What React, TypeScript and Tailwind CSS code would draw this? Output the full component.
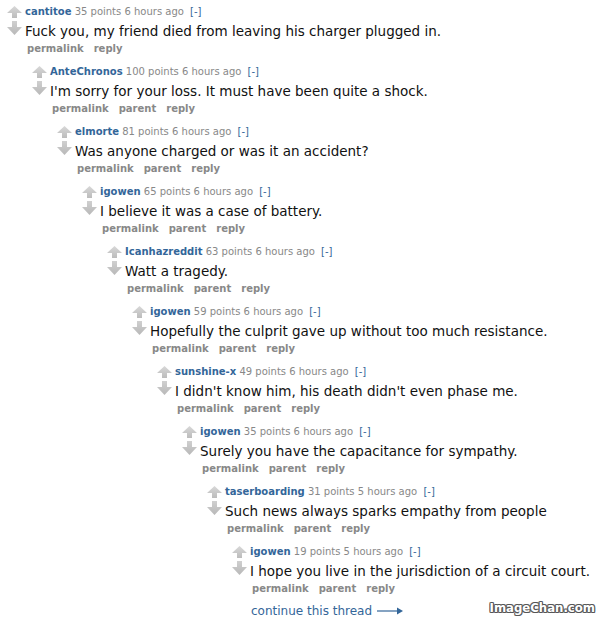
import React from "react";

type C = { user: string; points: number; time: string; body: string };

const comments: C[] = [
  { user: "cantitoe", points: 35, time: "6 hours", body: "Fuck you, my friend died from leaving his charger plugged in." },
  { user: "AnteChronos", points: 100, time: "6 hours", body: "I'm sorry for your loss. It must have been quite a shock." },
  { user: "elmorte", points: 81, time: "6 hours", body: "Was anyone charged or was it an accident?" },
  { user: "igowen", points: 65, time: "6 hours", body: "I believe it was a case of battery." },
  { user: "Icanhazreddit", points: 63, time: "6 hours", body: "Watt a tragedy." },
  { user: "igowen", points: 59, time: "6 hours", body: "Hopefully the culprit gave up without too much resistance." },
  { user: "sunshine-x", points: 49, time: "6 hours", body: "I didn't know him, his death didn't even phase me." },
  { user: "igowen", points: 35, time: "6 hours", body: "Surely you have the capacitance for sympathy." },
  { user: "taserboarding", points: 31, time: "5 hours", body: "Such news always sparks empathy from people" },
  { user: "igowen", points: 19, time: "5 hours", body: "I hope you live in the jurisdiction of a circuit court." },
];

const font = { fontFamily: '"DejaVu Sans", Verdana, sans-serif' };

function Up() {
  return (
    <svg width="15" height="12" viewBox="0 0 15 12">
      <defs>
        <linearGradient id="gu" x1="0" y1="0" x2="0" y2="1">
          <stop offset="0" stopColor="#d8d8d8" />
          <stop offset="1" stopColor="#bcbcbc" />
        </linearGradient>
      </defs>
      <polygon points="7.5,0 15,7 10,7 10,12 5,12 5,7 0,7" fill="url(#gu)" />
    </svg>
  );
}

function Down() {
  return (
    <svg width="15" height="14" viewBox="0 0 15 14">
      <defs>
        <linearGradient id="gd" x1="0" y1="0" x2="0" y2="1">
          <stop offset="0" stopColor="#d0d0d0" />
          <stop offset="1" stopColor="#b8b8b8" />
        </linearGradient>
      </defs>
      <polygon points="5,0 10,0 10,6 15,6 7.5,14 0,6 5,6" fill="url(#gd)" />
    </svg>
  );
}

function Comment({ idx }: { idx: number }) {
  const c = comments[idx];
  const last = idx === comments.length - 1;
  return (
    <div>
      <div className="flex">
        <div className="ml-[7px] mr-[3px] flex w-[15px] flex-col pt-[6px]">
          <Up />
          <div className="mt-[3px]">
            <Down />
          </div>
        </div>
        <div className="pt-[5px] pb-[4px]">
          <div className="h-[14px] text-[10px] leading-[14px] whitespace-nowrap">
            <span className="font-bold text-[#336699]">{c.user}</span>
            <span className="text-[#888888]"> {c.points} points {c.time} ago </span>
            <span className="ml-[3px] text-[#336699]">[-]</span>
          </div>
          <div className="mt-[2px] text-[13.5px] leading-[20px] text-[#111111] whitespace-nowrap">{c.body}</div>
          <div className="mt-[1px] flex gap-[10px] pl-[2px] text-[10px] font-bold leading-[14px] text-[#888888]">
            <span>permalink</span>
            {idx > 0 && <span>parent</span>}
            <span>reply</span>
          </div>
        </div>
      </div>
      {!last ? (
        <div className="ml-[25px]">
          <Comment idx={idx + 1} />
        </div>
      ) : (
        <div className="ml-[26px] mt-[1px] flex items-center gap-[5px] text-[12px] leading-[20px] text-[#336699]">
          <span>continue this thread</span>
          <svg width="26" height="10" viewBox="0 0 26 10">
            <line x1="0" y1="5" x2="21" y2="5" stroke="#336699" strokeWidth="1.2" />
            <polygon points="20,1.5 26,5 20,8.5" fill="#336699" />
          </svg>
        </div>
      )}
    </div>
  );
}

export default function App() {
  return (
    <div className="relative h-[620px] w-[598px] overflow-hidden bg-white" style={font}>
      <Comment idx={0} />
      <div
        className="absolute right-[3px] bottom-[4px] text-[13px] font-bold leading-[16px] text-white"
        style={{
          fontFamily: '"DejaVu Sans Condensed", "DejaVu Sans", sans-serif',
          textShadow:
            "1px 0 0 #555, -1px 0 0 #555, 0 1px 0 #555, 0 -1px 0 #555, 1px 1px 0 #666, -1px -1px 0 #888, 1px -1px 0 #777, -1px 1px 0 #777",
        }}
      >
        ImageChan.com
      </div>
    </div>
  );
}
